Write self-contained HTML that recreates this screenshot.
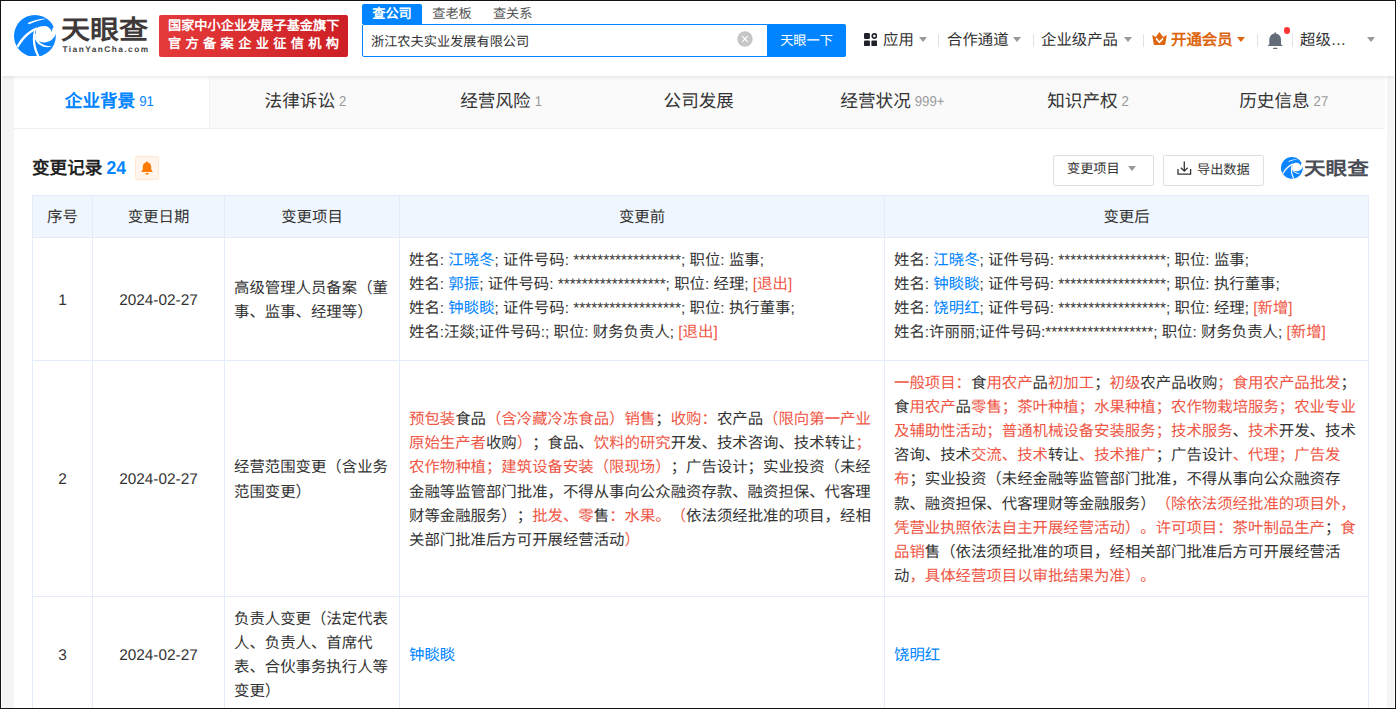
<!DOCTYPE html>
<html lang="zh-CN">
<head>
<meta charset="utf-8">
<title>天眼查 - 变更记录</title>
<style>
html,body{margin:0;padding:0}
body{width:1396px;height:709px;overflow:hidden;position:relative;background:#f5f5f5;font-family:"Liberation Sans",sans-serif;color:#333;font-size:15.4px;line-height:24.2px;text-spacing-trim:space-all;text-rendering:geometricPrecision}
*{box-sizing:border-box}
a{color:#0084ff;text-decoration:none}
.abs{position:absolute;white-space:nowrap}
.frame{position:absolute;left:0;top:0;width:1396px;height:709px;border:1px solid #141414;z-index:50;pointer-events:none}
.frame2{position:absolute;left:1px;top:1px;width:1394px;height:707px;border:1px solid #fff;border-top:0;border-bottom:0;z-index:49;pointer-events:none}

/* ---------- header ---------- */
.header{position:absolute;left:1px;top:1px;width:1394px;height:75px;background:#fff;box-shadow:0 1px 4px rgba(0,0,0,.10);z-index:10}
.logo-icon{position:absolute;left:13px;top:13.6px;width:41.8px;height:41.8px}
.logo-cn{position:absolute;left:59.8px;top:14.3px;font-size:26.4px;line-height:30px;font-weight:bold;color:#3f3a39;white-space:nowrap;transform:scaleX(1.1);transform-origin:0 0}
.logo-en{position:absolute;left:61.5px;top:43px;font-size:8.3px;line-height:10px;font-weight:bold;color:#444;letter-spacing:1.45px;white-space:nowrap}
.badge{position:absolute;left:158px;top:14px;width:189px;height:42px;border-radius:2px;background:linear-gradient(90deg,#e53a3a,#cd1f25);color:#fff;font-weight:bold;font-size:13.2px;white-space:nowrap}
.badge .l1{position:absolute;left:9px;top:3px;line-height:16px}
.badge .l2{position:absolute;left:9px;top:21px;line-height:16px;letter-spacing:4.35px}
.stabs{position:absolute;left:361px;top:3px;height:20px;font-size:13.2px;line-height:20px;white-space:nowrap}
.stabs>span{position:absolute;top:0;height:20px;text-align:center;color:#555}
.stabs>.on{left:0;width:60px;background:#0084ff;color:#fff;font-weight:bold;border-radius:2px 2px 0 0}
.sinput{position:absolute;left:361px;top:23px;width:406px;height:33px;border:1px solid #0084ff;border-radius:2px 0 0 2px;background:#fff}
.sinput .txt{position:absolute;left:8px;top:1px;line-height:31px;font-size:13.2px;color:#333;white-space:nowrap}
.sclear{position:absolute;left:736.4px;top:30.3px;width:16px;height:16px}
.sbtn{position:absolute;left:766px;top:23px;width:79px;height:33px;background:#0084ff;color:#fff;font-size:13.2px;line-height:33px;text-align:center;border-radius:0 2px 2px 0;white-space:nowrap}
.nav{font-size:15.4px;line-height:20px;color:#333;top:30.4px}
.sep{position:absolute;top:33px;width:1px;height:13px;background:#e0e3ea}
.caret{position:absolute;top:36px;width:0;height:0;border-left:4.5px solid transparent;border-right:4.5px solid transparent;border-top:5px solid #999}

/* ---------- panel ---------- */
.panel{position:absolute;left:14px;top:76px;width:1373px;height:640px;background:#fff}
.tabs{position:absolute;left:0;top:0;width:1371px;height:53px;background:#fafafa;border-bottom:1px solid #f0f0f0}
.tab{position:absolute;top:0;height:52px;width:195.65px;text-align:center;font-size:17.6px;line-height:50px;color:#333;white-space:nowrap}
.tab i{font-style:normal;font-size:13.2px;color:#999;margin-left:4px;margin-right:4px;display:inline-block;transform:scaleY(1.08);transform-origin:50% 72%}
.tab.on{background:#fff;color:#0084ff;font-weight:bold;border-right:1px solid #f3f3f3}
.tab.on i{color:#0084ff;font-weight:normal}

.title{position:absolute;left:18px;top:80px;font-size:17.6px;line-height:24px;font-weight:bold;color:#222;white-space:nowrap}
.title b{color:#0084ff;margin-left:4px;display:inline-block;transform:scaleY(1.06);transform-origin:50% 80%}
.bellbtn{position:absolute;left:121px;top:80px;width:24px;height:24px;border:1px solid #ffe7d2;background:#fff5ec;border-radius:2px}
.btn{position:absolute;top:79px;height:31px;border:1px solid #e0e0e0;border-radius:2px;background:#fff;font-size:13.2px;line-height:28px;color:#333;white-space:nowrap}

/* ---------- table ---------- */
table.t{position:absolute;left:18px;top:119px;border-collapse:collapse;table-layout:fixed;width:1336px}
.t th,.t td{border:1px solid #e4ecf7;padding:4px 9px 0 9px;font-weight:normal;font-size:15.4px;line-height:24.2px;color:#333;vertical-align:middle;white-space:nowrap;overflow:hidden}
.t th{background:#f0f6fd;height:42px;text-align:center;padding-top:3px}
.t td.c{text-align:center}
.t td.l{text-align:left}
.t tr.r1 td{height:123px}
.t tr.r2 td{height:236px}
.t tr.r3 td{height:115px}
.t td.top{vertical-align:top;padding-top:10.8px}
.ln{display:inline-block;white-space:nowrap;vertical-align:baseline;text-align:justify;text-align-last:justify}
.r{color:#ef5644}
</style>
</head>
<body>
<div class="frame"></div>
<div class="frame2"></div>

<!-- ================= HEADER ================= -->
<div class="header">
  <svg class="logo-icon" viewBox="55 62 570 570">
      <circle cx="340" cy="347" r="285" fill="#0a84ff"/>
      <path d="M360 243 C430 200 545 190 568 298 C570 262 580 240 600 222 L680 200 L680 326 L623 326 C600 400 520 445 450 436 C420 432 398 424 385 414 C352 372 340 300 360 243 Z" fill="#fff"/>
      <path d="M356 318 C356 414 440 490 572 490 C470 530 336 458 328 330 Z" fill="#fff"/>
      <path d="M352 250 C322 360 344 520 404 626 L374 632 C312 520 294 380 330 262 Z" fill="#fff"/>
      <path d="M92 486 C150 366 250 276 362 228 L374 256 C264 304 176 396 114 510 Z" fill="#fff"/>
      <path d="M240 176 C300 136 400 112 500 113 C420 130 335 154 262 188 Z" fill="#fff"/>
  </svg>
  <div class="logo-cn"><span class="ln" style="width:79.17px">天眼查</span></div>
  <div class="logo-en">TianYanCha.com</div>
  <div class="badge"><div class="l1"><span class="ln" style="width:171.44px">国家中小企业发展子基金旗下</span></div><div class="l2"><span class="ln" style="width:175.38px">官方备案企业征信机构</span></div></div>

  <div class="stabs"><span class="on"><span class="ln" style="width:39.56px">查公司</span></span><span style="left:69px;width:42px"><span class="ln" style="width:39.56px">查老板</span></span><span style="left:129.7px;width:42px"><span class="ln" style="width:39.56px">查关系</span></span></div>
  <div class="sinput"><div class="txt"><span class="ln" style="width:158.25px">浙江农夫实业发展有限公司</span></div></div>
  <svg class="sclear" viewBox="0 0 16 16"><circle cx="8" cy="8" r="7.7" fill="#c6c6c6"/><path d="M5.2 5.2L10.8 10.8M10.8 5.2L5.2 10.8" stroke="#fff" stroke-width="1.2" fill="none"/></svg>
  <div class="sbtn"><span class="ln" style="width:52.75px">天眼一下</span></div>

  <!-- nav (coordinates are relative to header: page x-1, y-1) -->
  <svg class="abs" style="left:863.1px;top:32.2px;width:13.3px;height:13.3px" viewBox="0 0 13.3 13.3">
    <rect x="0" y="0" width="5.9" height="5.9" rx="1.2" fill="#1f2329"/>
    <rect x="0" y="7.4" width="5.9" height="5.9" rx="1.2" fill="#1f2329"/>
    <rect x="7.4" y="7.4" width="5.9" height="5.9" rx="1.2" fill="#1f2329"/>
    <circle cx="10.35" cy="2.95" r="2.1" fill="none" stroke="#1f2329" stroke-width="1.7"/>
  </svg>
  <div class="abs nav" style="left:882px"><span class="ln" style="width:30.80px">应用</span></div>
  <div class="caret" style="left:918px"></div>
  <div class="sep" style="left:937px"></div>
  <div class="abs nav" style="left:946px"><span class="ln" style="width:61.58px">合作通道</span></div>
  <div class="caret" style="left:1012px"></div>
  <div class="sep" style="left:1032px"></div>
  <div class="abs nav" style="left:1040px"><span class="ln" style="width:76.97px">企业级产品</span></div>
  <div class="caret" style="left:1122.6px"></div>
  <div class="sep" style="left:1142px"></div>
  <svg class="abs" style="left:1151.1px;top:31.2px;width:15px;height:13px" viewBox="0 0 15 13">
    <path d="M0.2 3.1 L3.7 4.9 L7.4 0 L11.1 4.9 L14.8 3.1 L13.3 12 Q13.2 12.9 12.3 12.9 H2.7 Q1.8 12.9 1.7 12 Z" fill="#dd6710"/>
    <path d="M4 6.4 L7.5 10.4 L11 6.4" fill="none" stroke="#fff" stroke-width="1.6"/>
  </svg>
  <div class="abs nav" style="left:1170px;color:#dd6710;font-weight:bold"><span class="ln" style="width:61.58px">开通会员</span></div>
  <div class="caret" style="left:1236px;border-top-color:#dd6710"></div>
  <div class="sep" style="left:1256px"></div>
  <svg class="abs" style="left:1266px;top:30px;width:17px;height:19px" viewBox="0 0 17 19">
    <path d="M7.6 1.2 H8.8 V2.6 C11.9 3 14 5.5 14 8.6 V13.4 L15.5 14.3 V15 H0.9 V14.3 L2.3 13.4 V8.6 C2.3 5.5 4.5 3 7.6 2.6 Z" fill="#626b78"/>
    <rect x="6.05" y="16.8" width="4.3" height="1.1" rx="0.5" fill="#626b78"/>
  </svg>
  <div class="abs" style="left:1282.5px;top:26.3px;width:6.6px;height:6.6px;border-radius:50%;background:#ff3535"></div>
  <div class="sep" style="left:1291px"></div>
  <div class="abs nav" style="left:1299px"><span class="ln" style="width:46.19px">超级…</span></div>
  <div class="caret" style="left:1366px"></div>
</div>

<!-- ================= PANEL ================= -->
<div class="panel">
  <div class="tabs">
    <div class="tab on" style="left:0"><span class="ln" style="width:70.39px">企业背景</span><i>91</i></div>
    <div class="tab" style="left:195.65px"><span class="ln" style="width:70.39px">法律诉讼</span><i>2</i></div>
    <div class="tab" style="left:391.3px"><span class="ln" style="width:70.39px">经营风险</span><i>1</i></div>
    <div class="tab" style="left:586.95px"><span class="ln" style="width:70.39px">公司发展</span></div>
    <div class="tab" style="left:782.6px"><span class="ln" style="width:70.39px">经营状况</span><i>999+</i></div>
    <div class="tab" style="left:978.25px"><span class="ln" style="width:70.39px">知识产权</span><i>2</i></div>
    <div class="tab" style="left:1173.9px"><span class="ln" style="width:70.39px">历史信息</span><i>27</i></div>
  </div>

  <div class="title"><span class="ln" style="width:70.39px">变更记录</span><b>24</b></div>
  <div class="bellbtn">
    <svg style="position:absolute;left:5px;top:4px;width:12px;height:14px" viewBox="0 0 12 14">
      <path d="M6 0.4 C6.6 0.4 7 0.8 7 1.4 C9.2 1.9 10.2 3.7 10.2 5.8 V8.4 L11.6 10.4 V11 H0.4 V10.4 L1.8 8.4 V5.8 C1.8 3.7 2.8 1.9 5 1.4 C5 0.8 5.4 0.4 6 0.4 Z" fill="#ff7a00"/>
      <rect x="4.3" y="12" width="3.4" height="1.4" rx="0.7" fill="#ff7a00"/>
    </svg>
  </div>

  <div class="btn" style="left:1039px;width:101px"><span style="position:absolute;left:13px;top:-1.2px"><span class="ln" style="width:52.75px">变更项目</span></span><i class="caret" style="left:73.6px;top:9.8px;border-left-width:4.5px;border-right-width:4.5px;border-top-width:5.5px"></i></div>
  <div class="btn" style="left:1149px;width:101px">
    <svg style="position:absolute;left:13px;top:5px;width:15px;height:15px" viewBox="0 0 15 15"><path d="M7.3 0.6V10M3.9 6.8L7.3 10.2L10.7 6.8M1 7.9V13.2H13.6V7.9" fill="none" stroke="#333" stroke-width="1.3"/></svg>
    <span style="position:absolute;left:33px;top:0"><span class="ln" style="width:52.75px">导出数据</span></span>
  </div>
  <svg class="abs" style="left:1266.9px;top:81.4px;width:21.8px;height:21.8px" viewBox="55 62 570 570">
      <circle cx="340" cy="347" r="285" fill="#0a84ff"/>
      <path d="M360 243 C430 200 545 190 568 298 C570 262 580 240 600 222 L680 200 L680 326 L623 326 C600 400 520 445 450 436 C420 432 398 424 385 414 C352 372 340 300 360 243 Z" fill="#fff"/>
      <path d="M356 318 C356 414 440 490 572 490 C470 530 336 458 328 330 Z" fill="#fff"/>
      <path d="M352 250 C322 360 344 520 404 626 L374 632 C312 520 294 380 330 262 Z" fill="#fff"/>
      <path d="M92 486 C150 366 250 276 362 228 L374 256 C264 304 176 396 114 510 Z" fill="#fff"/>
      <path d="M240 176 C300 136 400 112 500 113 C420 130 335 154 262 188 Z" fill="#fff"/>
  </svg>
  <div class="abs" style="left:1290px;top:78px;font-size:18.6px;line-height:30px;font-weight:bold;color:#4a4d55;transform:scaleX(1.16);transform-origin:0 0"><span class="ln" style="width:55.80px">天眼查</span></div>

  <table class="t">
    <colgroup><col style="width:60px"><col style="width:132px"><col style="width:175px"><col style="width:485px"><col style="width:484px"></colgroup>
    <tr><th><span class="ln" style="width:30.80px">序号</span></th><th><span class="ln" style="width:61.58px">变更日期</span></th><th><span class="ln" style="width:61.58px">变更项目</span></th><th><span class="ln" style="width:46.19px">变更前</span></th><th><span class="ln" style="width:46.19px">变更后</span></th></tr>
    <tr class="r1">
      <td class="c">1</td><td class="c">2024-02-27</td>
      <td class="l"><span class="ln" style="width:153.92px">高级管理人员备案（董</span><br><span class="ln" style="width:138.53px">事、监事、经理等）</span></td>
      <td class="l top"><span class="ln" style="width:354.95px">姓名: <a>江晓冬</a>; 证件号码: ******************; 职位: 监事;</span><br><span class="ln" style="width:383.19px">姓名: <a>郭振</a>; 证件号码: ******************; 职位: 经理; <span class="r">[退出]</span></span><br><span class="ln" style="width:385.73px">姓名: <a>钟睒睒</a>; 证件号码: ******************; 职位: 执行董事;</span><br><span class="ln" style="width:308.69px">姓名:汪燚;证件号码:; 职位: 财务负责人; <span class="r">[退出]</span></span></td>
      <td class="l top"><span class="ln" style="width:354.95px">姓名: <a>江晓冬</a>; 证件号码: ******************; 职位: 监事;</span><br><span class="ln" style="width:385.73px">姓名: <a>钟睒睒</a>; 证件号码: ******************; 职位: 执行董事;</span><br><span class="ln" style="width:398.58px">姓名: <a>饶明红</a>; 证件号码: ******************; 职位: 经理; <span class="r">[新增]</span></span><br><span class="ln" style="width:431.89px">姓名:许丽丽;证件号码:******************; 职位: 财务负责人; <span class="r">[新增]</span></span></td>
    </tr>
    <tr class="r2">
      <td class="c">2</td><td class="c">2024-02-27</td>
      <td class="l"><span class="ln" style="width:153.92px">经营范围变更（含业务</span><br><span class="ln" style="width:76.97px">范围变更）</span></td>
      <td class="l"><span class="ln" style="width:461.83px"><span class="r">预包装</span>食品<span class="r">（含冷藏冷冻食品）销售</span>；<span class="r">收购：</span>农产品<span class="r">（限向第一产业</span></span><br><span class="ln" style="width:461.83px"><span class="r">原始生产者</span>收购<span class="r">）</span>；食品、<span class="r">饮料的研究</span>开发、技术咨询、技术转让<span class="r">；</span></span><br><span class="ln" style="width:461.75px"><span class="r">农作物种植；建筑设备安装（限现场）</span>；广告设计；实业投资（未经</span><br><span class="ln" style="width:461.73px">金融等监管部门批准，不得从事向公众融资存款、融资担保、代客理</span><br><span class="ln" style="width:461.80px">财等金融服务）；<span class="r">批发、零</span>售<span class="r">：水果。（</span>依法须经批准的项目，经相</span><br><span class="ln" style="width:230.89px">关部门批准后方可开展经营活动<span class="r">）</span></span></td>
      <td class="l"><span class="ln" style="width:461.88px"><span class="r">一般项目：</span>食<span class="r">用农产</span>品<span class="r">初加工</span>；<span class="r">初级</span>农产品收购<span class="r">；食用农产品批发</span>；</span><br><span class="ln" style="width:461.78px">食<span class="r">用农产</span>品<span class="r">零售；茶叶种植；水果种植；农作物栽培服务；农业专业</span></span><br><span class="ln" style="width:461.78px"><span class="r">及辅助性活动；普通机械设备安装服务；技术服务</span>、<span class="r">技术</span>开发、技术</span><br><span class="ln" style="width:446.42px">咨询、技术<span class="r">交流、技术</span>转让<span class="r">、技术推广</span>；广告设计<span class="r">、代理；广告发</span></span><br><span class="ln" style="width:446.36px"><span class="r">布</span>；实业投资（未经金融等监管部门批准，不得从事向公众融资存</span><br><span class="ln" style="width:461.75px">款、融资担保、代客理财等金融服务）<span class="r">（除依法须经批准的项目外，</span></span><br><span class="ln" style="width:461.77px"><span class="r">凭营业执照依法自主开展经营活动）。许可项目：茶叶制品生产</span>；<span class="r">食</span></span><br><span class="ln" style="width:446.36px"><span class="r">品销</span>售（依法须经批准的项目，经相关部门批准后方可开展经营活</span><br><span class="ln" style="width:261.67px">动<span class="r">，具体经营项目以审批结果为准）。</span></span></td>
    </tr>
    <tr class="r3">
      <td class="c">3</td><td class="c">2024-02-27</td>
      <td class="l"><span class="ln" style="width:153.92px">负责人变更（法定代表</span><br><span class="ln" style="width:138.53px">人、负责人、首席代</span><br><span class="ln" style="width:153.92px">表、合伙事务执行人等</span><br><span class="ln" style="width:46.19px">变更）</span></td>
      <td class="l"><span class="ln" style="width:46.19px"><a>钟睒睒</a></span></td>
      <td class="l"><span class="ln" style="width:46.19px"><a>饶明红</a></span></td>
    </tr>
  </table>
</div>
</body>
</html>
